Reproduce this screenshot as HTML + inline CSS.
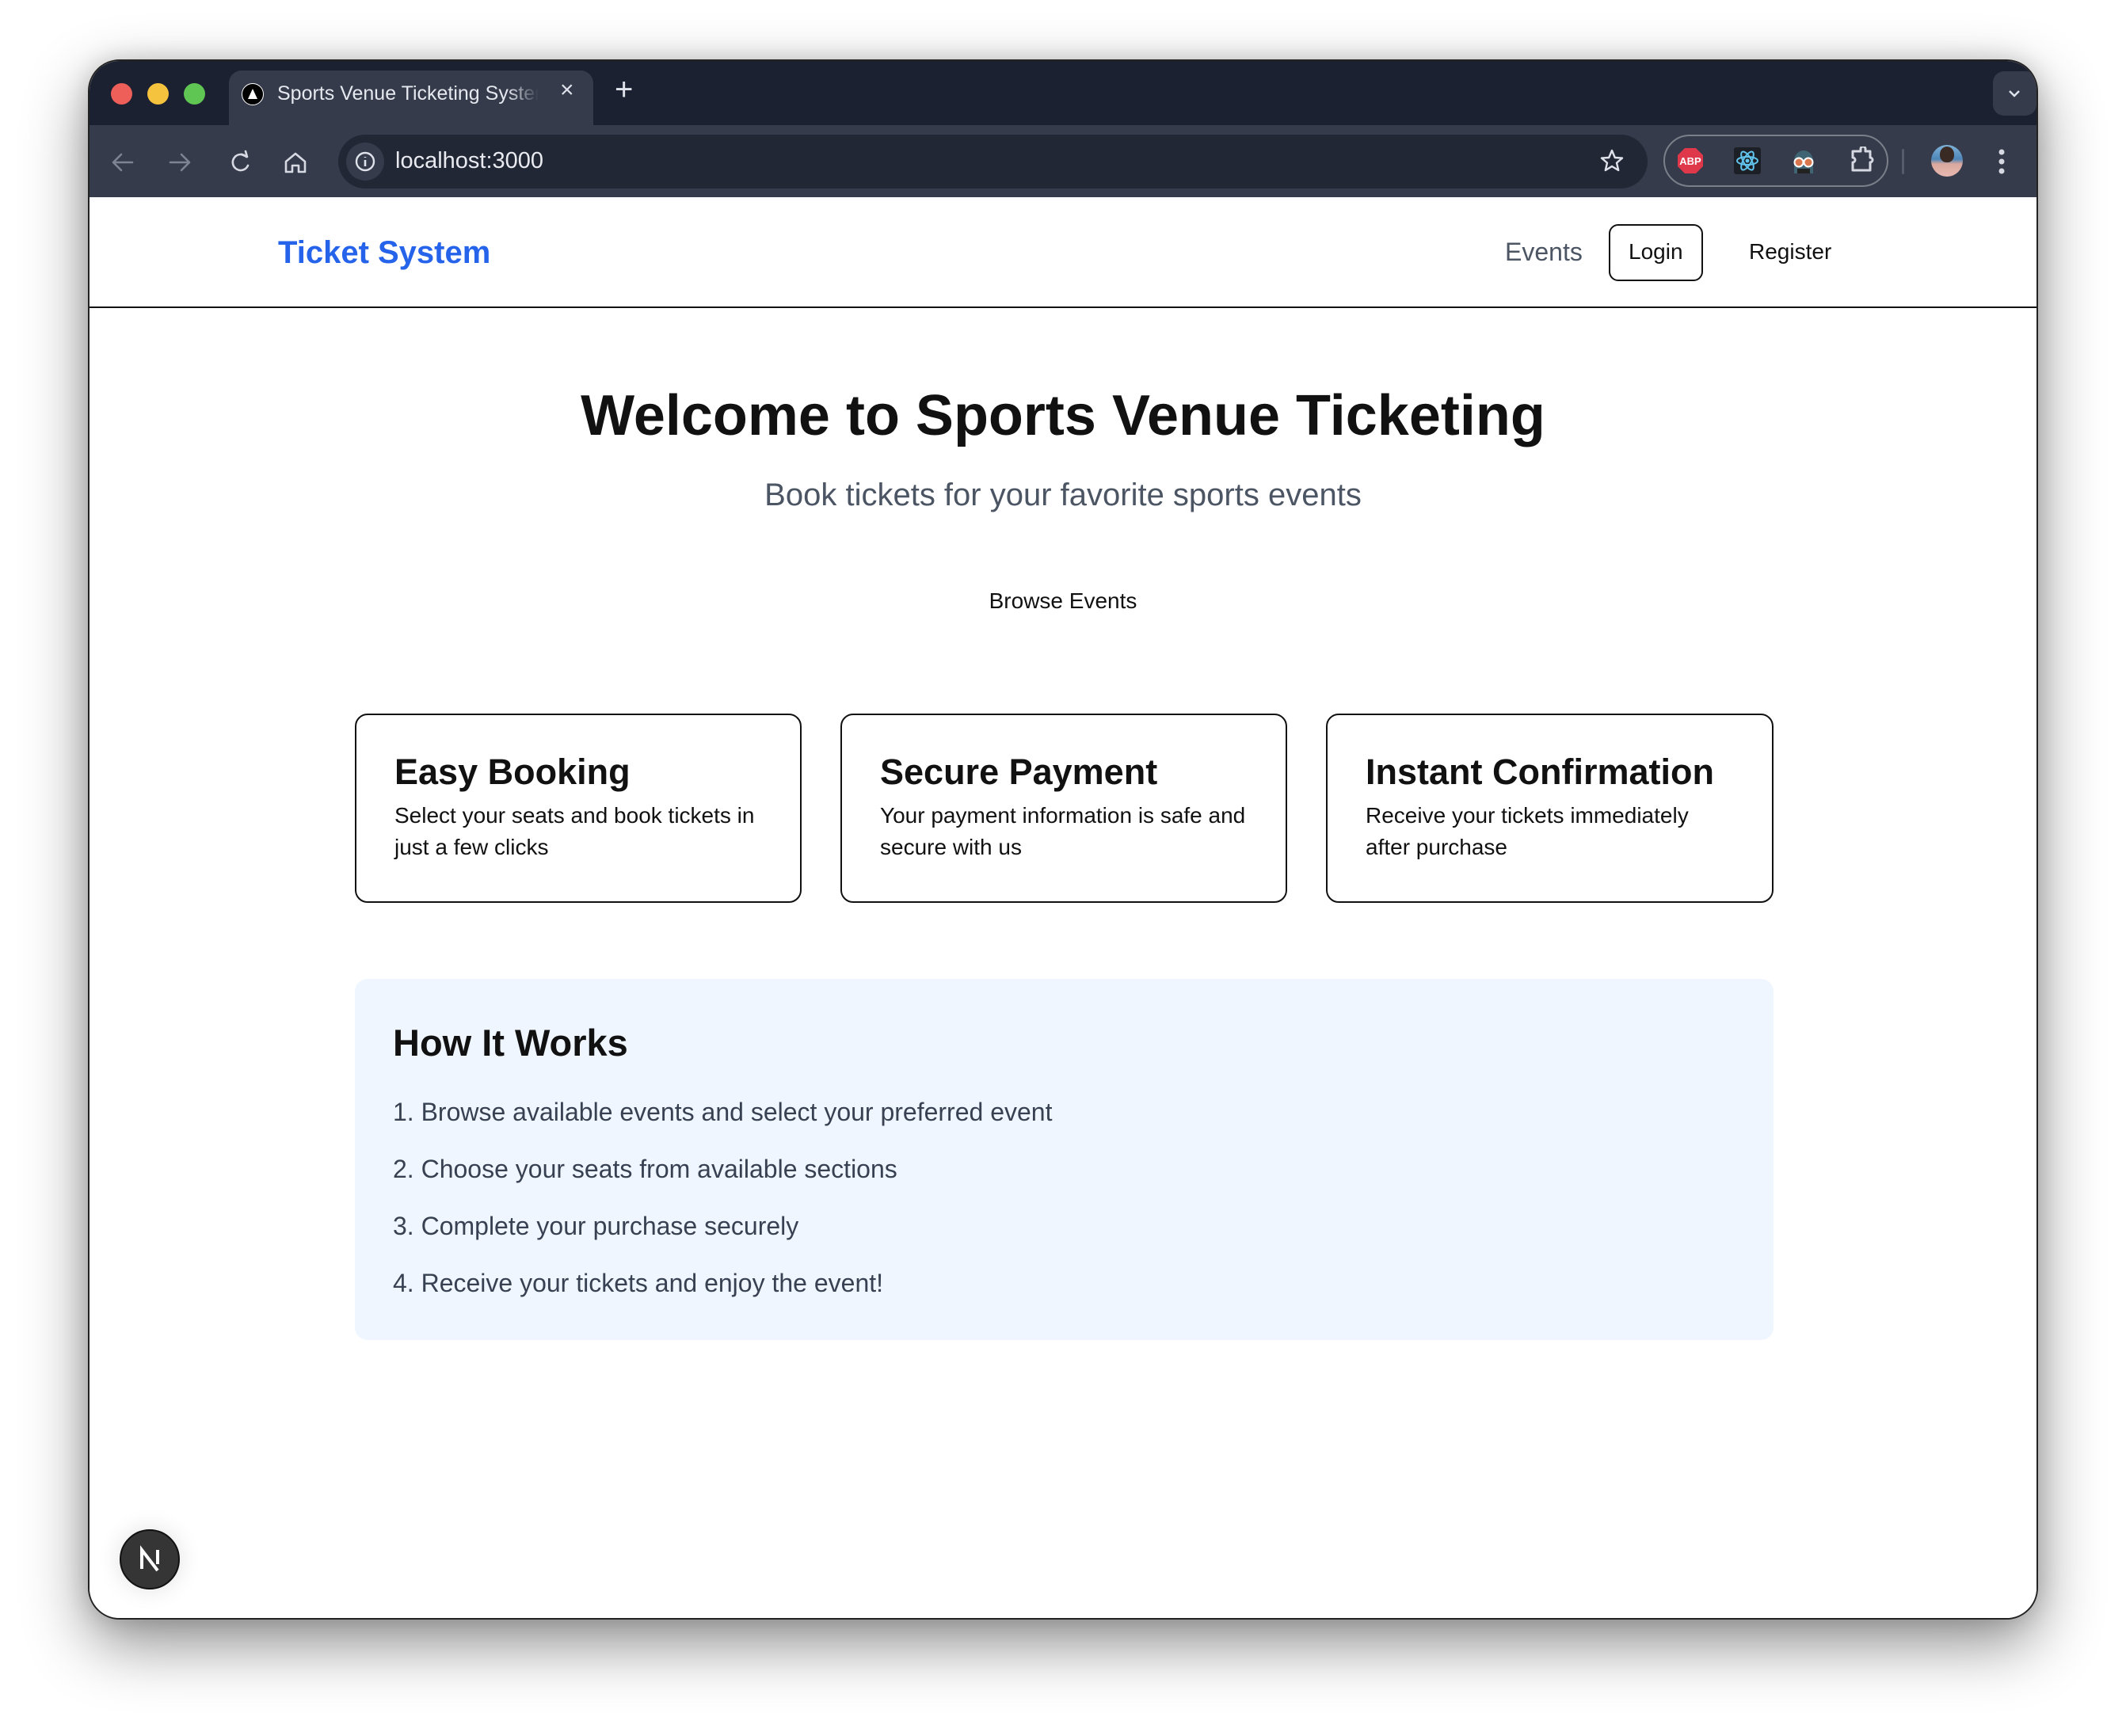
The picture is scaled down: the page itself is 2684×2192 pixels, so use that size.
<!DOCTYPE html>
<html><head><meta charset="utf-8"><style>
*{box-sizing:border-box;margin:0;padding:0}
html,body{width:2684px;height:2192px;overflow:hidden;background:#fff;font-family:"Liberation Sans",Arial,sans-serif}
.win{position:absolute;left:111px;top:75px;width:2462px;height:1970px;border-radius:40px;overflow:hidden;background:#fff;border:2px solid #222;box-shadow:0 30px 80px rgba(0,0,0,.45),0 0 30px rgba(0,0,0,.15)}
.abs{position:absolute}
.tabbar{left:0;top:0;width:100%;height:82px;background:#1c2131}
.toolbar{left:0;top:81px;width:100%;height:93px;background:#353b4b}
.content{left:0;top:172px;width:100%;height:1800px;background:#fff}
.dot{width:27px;height:27px;border-radius:50%;top:28px}
</style></head><body>
<div class="win">
 <div class="abs tabbar"></div>
 <div class="abs dot" style="left:27px;background:#ee5f5a"></div>
 <div class="abs dot" style="left:73px;background:#f5c33d"></div>
 <div class="abs dot" style="left:119px;background:#5fc553"></div>
 <div class="abs" style="left:176px;top:12px;width:460px;height:80px;background:#353b4b;border-radius:16px 16px 0 0"></div>
 <div class="abs" style="left:192px;top:28px;width:28px;height:28px;border-radius:50%;background:#000;border:1px solid #fff"><svg width="28" height="28" viewBox="0 0 28 28" style="position:absolute;left:-1px;top:-1px"><path d="M14 7 L20 20 L8 20 Z" fill="#fff"/></svg></div>
 <div class="abs" style="left:237px;top:27px;font-size:25px;color:#e6e8ef;width:330px;white-space:nowrap;overflow:hidden;-webkit-mask-image:linear-gradient(90deg,#000 88%,transparent)">Sports Venue Ticketing System</div>
 <div class="abs" style="left:594px;top:20px;font-size:30px;color:#dfe2ea">×</div>
 <div class="abs" style="left:663px;top:14px;font-size:40px;color:#dfe2ea;font-weight:300">+</div>
 <div class="abs" style="left:2403px;top:13px;width:55px;height:56px;border-radius:14px;background:#353b4b"></div>
 <svg class="abs" style="left:2420px;top:32px" width="20" height="18"><path d="M4 6 L10 12 L16 6" stroke="#dfe2ea" stroke-width="2.5" fill="none"/></svg>
 <div class="abs toolbar"></div>
 <svg class="abs" style="left:26px;top:110px" width="260" height="36" stroke-width="2.6" fill="none" stroke-linecap="round" stroke-linejoin="round">
  <path d="M28 18H4M14 8L4 18L14 28" stroke="#7d8394"/>
  <path d="M76 18H100M90 8L100 18L90 28" stroke="#7d8394"/>
  <path d="M172 11A10 10 0 1 0 174 22" stroke="#d6d9e2"/><path d="M166 8L173 11L171 4" stroke="#d6d9e2"/>
  <path d="M236 30V17L248 7L260 17V30H252V22H244V30Z" stroke="#d6d9e2" transform="translate(-14,0)"/>
 </svg>
 <div class="abs" style="left:314px;top:93px;width:1653px;height:68px;border-radius:34px;background:#222735"></div>
 <div class="abs" style="left:324px;top:103px;width:48px;height:48px;border-radius:50%;background:#353b4b"></div>
 <svg class="abs" style="left:334px;top:113px" width="28" height="28"><circle cx="14" cy="14" r="11" stroke="#dfe2ea" stroke-width="2.4" fill="none"/><path d="M14 12V20M14 8V9" stroke="#dfe2ea" stroke-width="2.6"/></svg>
 <div class="abs" style="left:386px;top:110px;font-size:29px;color:#e8eaf0">localhost:3000</div>
 <svg class="abs" style="left:1906px;top:110px" width="32" height="32"><path d="M16 3L19.8 12 29 12.6 22 18.6 24.2 28 16 23 7.8 28 10 18.6 3 12.6 12.2 12Z" stroke="#dfe2ea" stroke-width="2.4" fill="none" stroke-linejoin="round"/></svg>
 <div class="abs" style="left:1987px;top:93px;width:284px;height:66px;border-radius:33px;border:2px solid #7b7f89"></div>
 <svg class="abs" style="left:2004px;top:109px" width="34" height="34"><polygon points="10,1 24,1 33,10 33,24 24,33 10,33 1,24 1,10" fill="#e0384b"/><text x="17" y="22" font-size="13" font-weight="bold" fill="#fff" text-anchor="middle" font-family="Liberation Sans">ABP</text></svg>
 <svg class="abs" style="left:2076px;top:109px" width="34" height="34"><rect width="34" height="34" rx="3" fill="#1c1f26"/><g stroke="#62c5ee" stroke-width="2" fill="none"><ellipse cx="17" cy="17" rx="13" ry="5"/><ellipse cx="17" cy="17" rx="13" ry="5" transform="rotate(60 17 17)"/><ellipse cx="17" cy="17" rx="13" ry="5" transform="rotate(-60 17 17)"/></g><circle cx="17" cy="17" r="2.5" fill="#62c5ee"/></svg>
 <svg class="abs" style="left:2146px;top:108px" width="36" height="36"><path d="M6 18A12 13 0 0 1 30 18V34H6Z" fill="#3f6574"/><circle cx="12" cy="20" r="5.5" fill="#d9774f" stroke="#fff" stroke-width="2"/><circle cx="24" cy="20" r="5.5" fill="#d9774f" stroke="#fff" stroke-width="2"/><rect x="10" y="28" width="16" height="6" fill="#222"/></svg>
 <svg class="abs" style="left:2222px;top:108px" width="36" height="36"><path d="M4 6H14V3A3 3 0 0 1 20 3V6H26V14A3 3 0 0 1 26 20V30H4V20A3 3 0 0 0 4 14Z" stroke="#d6d9e2" stroke-width="3" fill="none" stroke-linejoin="round"/></svg>
 <div class="abs" style="left:2288px;top:111px;width:3px;height:32px;background:#555b69;border-radius:2px"></div>
 <div class="abs" style="left:2325px;top:106px;width:40px;height:40px;border-radius:50%;background:linear-gradient(180deg,#7fb2d8 0%,#4d86b8 45%,#d9a79d 60%,#e8b7b0 100%)"></div>
 <div class="abs" style="left:2336px;top:108px;width:18px;height:20px;border-radius:50% 50% 45% 45%;background:#3a2a24"></div>
 <svg class="abs" style="left:2408px;top:110px" width="12" height="34"><circle cx="6" cy="5" r="3.5" fill="#d6d9e2"/><circle cx="6" cy="17" r="3.5" fill="#d6d9e2"/><circle cx="6" cy="29" r="3.5" fill="#d6d9e2"/></svg>
 <div class="abs content"></div>
 <div class="abs" style="left:0;top:310px;width:100%;height:2px;background:#111"></div>
 <div class="abs" style="left:238px;top:218px;font-size:40px;font-weight:bold;color:#2563eb;line-height:48px">Ticket System</div>
 <div class="abs" style="left:1787px;top:221px;font-size:32px;color:#4b5563;line-height:40px">Events</div>
 <div class="abs" style="left:1918px;top:206px;width:119px;height:72px;border:2px solid #111;border-radius:12px"></div>
 <div class="abs" style="left:1943px;top:223px;font-size:28px;color:#111;line-height:36px">Login</div>
 <div class="abs" style="left:2095px;top:223px;font-size:28px;color:#111;line-height:36px">Register</div>
 <div class="abs" style="left:0;top:408px;width:100%;text-align:center;font-size:72px;font-weight:bold;color:#111;line-height:80px">Welcome to Sports Venue Ticketing</div>
 <div class="abs" style="left:0;top:520px;width:100%;text-align:center;font-size:40px;color:#4b5563;line-height:56px">Book tickets for your favorite sports events</div>
 <div class="abs" style="left:0;top:662px;width:100%;text-align:center;font-size:28px;color:#111;line-height:40px">Browse Events</div>

 <div class="abs" style="left:335px;top:824px;width:564px;height:239px;border:2px solid #111;border-radius:16px;padding:44px 48px 0 48px">
  <div style="font-size:45px;font-weight:bold;color:#111;line-height:56px">Easy Booking</div>
  <div style="margin-top:7px;font-size:28px;color:#111;line-height:40px">Select your seats and book tickets in just a few clicks</div></div>
 <div class="abs" style="left:948px;top:824px;width:564px;height:239px;border:2px solid #111;border-radius:16px;padding:44px 48px 0 48px">
  <div style="font-size:45px;font-weight:bold;color:#111;line-height:56px">Secure Payment</div>
  <div style="margin-top:7px;font-size:28px;color:#111;line-height:40px">Your payment information is safe and secure with us</div></div>
 <div class="abs" style="left:1561px;top:824px;width:565px;height:239px;border:2px solid #111;border-radius:16px;padding:44px 48px 0 48px">
  <div style="font-size:45px;font-weight:bold;color:#111;line-height:56px;white-space:nowrap">Instant Confirmation</div>
  <div style="margin-top:7px;font-size:28px;color:#111;line-height:40px">Receive your tickets immediately after purchase</div></div>

 <div class="abs" style="left:335px;top:1159px;width:1791px;height:456px;background:#eff6ff;border-radius:16px;padding:49px 48px">
  <div style="font-size:47px;font-weight:bold;color:#111;line-height:64px">How It Works</div>
  <div style="margin-top:31px;font-size:32px;color:#374151;line-height:48px">
   <div>1. Browse available events and select your preferred event</div>
   <div style="margin-top:24px">2. Choose your seats from available sections</div>
   <div style="margin-top:24px">3. Complete your purchase securely</div>
   <div style="margin-top:24px">4. Receive your tickets and enjoy the event!</div>
  </div></div>

 <div class="abs" style="left:38px;top:1854px;width:76px;height:76px;border-radius:50%;background:#353535;border:2px solid #111;box-shadow:0 0 30px rgba(0,0,0,.12)">
  <svg width="72" height="72" viewBox="0 0 72 72"><path d="M26 48V24L46 50" stroke="#fff" stroke-width="4" fill="none"/><path d="M46 24V42" stroke="#fff" stroke-width="4"/></svg></div>
</div>
</body></html>
